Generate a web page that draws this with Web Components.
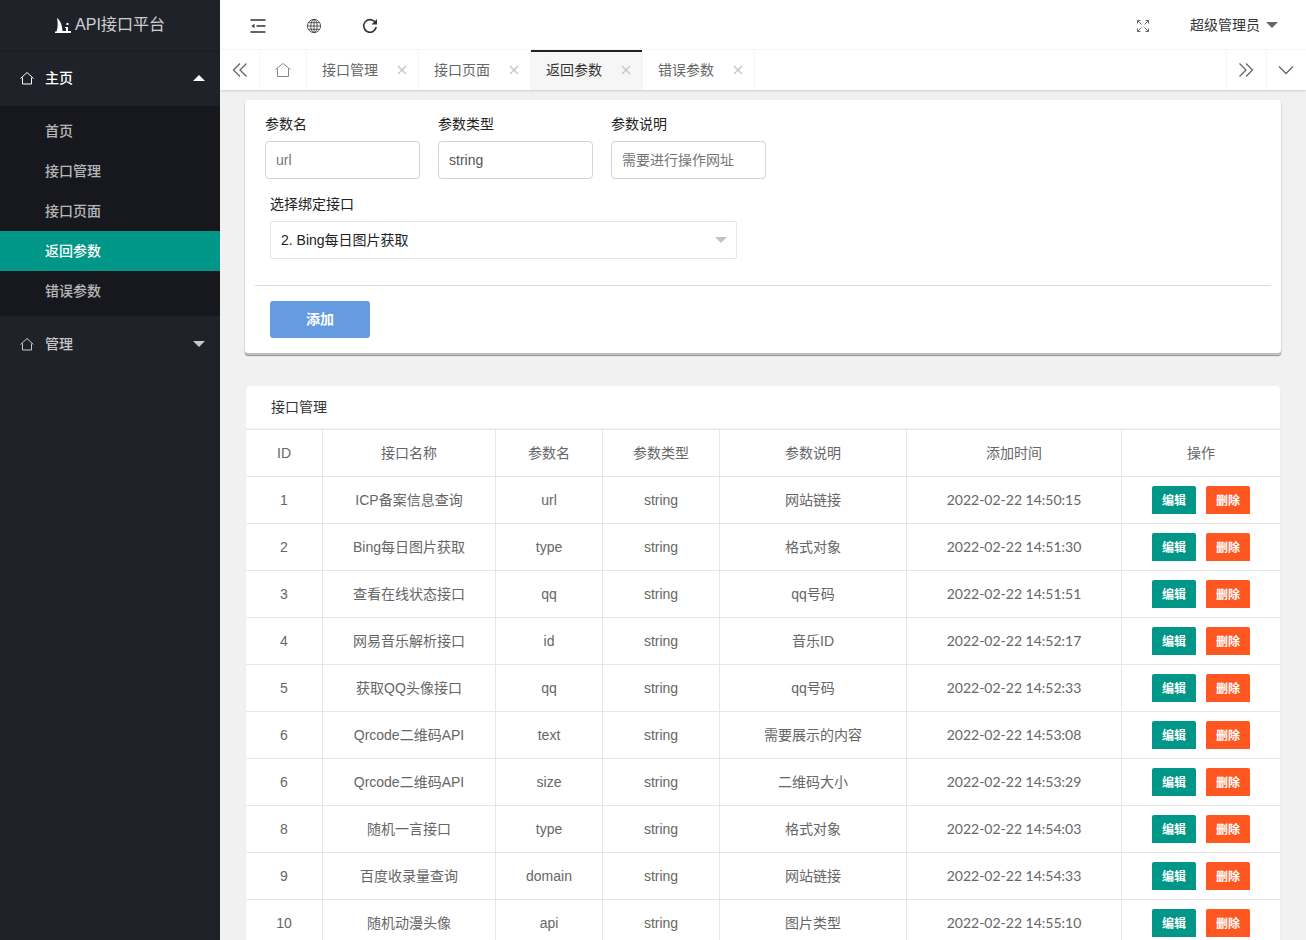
<!DOCTYPE html>
<html lang="zh-CN">
<head>
<meta charset="utf-8">
<meta name="viewport" content="width=device-width, initial-scale=1">
<title>API接口平台</title>
<style>
  body {
    margin: 0;
    background: #f1f1f1;
    color: #333;
    font: 14px/20px "Liberation Sans", "Noto Sans CJK SC", sans-serif;
  }
</style>
</head>
<body>
<app-shell>
  <side-nav slot="side">
    <nav-group label="主页" open>
      <nav-item>首页</nav-item>
      <nav-item>接口管理</nav-item>
      <nav-item>接口页面</nav-item>
      <nav-item active>返回参数</nav-item>
      <nav-item>错误参数</nav-item>
    </nav-group>
    <nav-group label="管理"></nav-group>
  </side-nav>
  <top-bar slot="top">超级管理员</top-bar>
  <tab-bar slot="tabs">
    <tab-item>接口管理</tab-item>
    <tab-item>接口页面</tab-item>
    <tab-item active>返回参数</tab-item>
    <tab-item>错误参数</tab-item>
  </tab-bar>
  <param-form></param-form>
  <param-table heading="接口管理"></param-table>
</app-shell>

<script>
const define = (name, html, setup) => {
  const template = document.createElement('template');
  template.innerHTML = html;
  customElements.define(name, class extends HTMLElement {
    connectedCallback() {
      if (this.shadowRoot) return;
      this.attachShadow({ mode: 'open' }).append(template.content.cloneNode(true));
      if (setup) setup(this, this.shadowRoot);
    }
  });
};

define('app-shell', `
  <style>
    :host { display: grid; grid-template-columns: 220px minmax(0, 1fr); height: 100vh; overflow: hidden; }
    .body { display: flex; flex-direction: column; min-width: 0; min-height: 0; }
    main { flex: 1; min-height: 0; overflow: auto; scrollbar-width: none; padding: 10px 25px 15px; }
  </style>
  <slot name="side"></slot>
  <div class="body">
    <slot name="top"></slot>
    <slot name="tabs"></slot>
    <main><slot></slot></main>
  </div>`);

define('side-nav', `
  <style>
    :host { display: block; background: #20222a; color: #fff; }
    .logo { display: flex; align-items: center; justify-content: center; gap: 4px; height: 50px;
      box-sizing: border-box; font-size: 16px; color: rgba(255,255,255,.8); box-shadow: 0 1px 2px rgba(0,0,0,.15); }
    svg { width: 16px; height: 16px; fill: #fff; }
  </style>
  <div class="logo">
    <svg viewBox="0 0 16 16" aria-hidden="true"><path d="M2 1c3 2 5 6 5.500 13H11v-3H10v-1h3v4h3v2H0v-1.500h1.500C3 11 3 5 2 1zM11.500 6h2v2h-2z"/></svg>
    <span>API接口平台</span>
  </div>
  <nav><slot></slot></nav>`);

define('nav-group', `
  <style>
    :host { display: block; color: rgba(255,255,255,.75); }
    :host([open]) { color: #fff; }
    button { all: unset; box-sizing: border-box; display: flex; align-items: center; width: 100%; height: 56px;
      padding: 0 15px 0 20px; cursor: pointer; font-weight: 500; }
    .home { width: 14px; height: 14px; margin-right: 11px; fill: none; stroke: currentColor; }
    .arrow { margin-left: auto; border: 6px solid transparent; border-top-color: currentColor; border-bottom: 0; }
    :host([open]) .arrow { border-top: 0; border-bottom: 6px solid currentColor; }
    .items { display: none; background: #17181e; padding: 5px 0; }
    :host([open]) .items { display: block; }
  </style>
  <button type="button">
    <svg class="home" viewBox="0 0 14 14" aria-hidden="true"><path d="M.5 7.500 7 1.500l6.500 6M2.500 6.500v6.500h9V6.500"/></svg>
    <span class="label"></span><span class="arrow"></span>
  </button>
  <div class="items"><slot></slot></div>`,
  (host, root) => {
    root.querySelector('.label').textContent = host.getAttribute('label');
    const button = root.querySelector('button');
    button.setAttribute('aria-expanded', host.hasAttribute('open'));
    button.onclick = () => button.setAttribute('aria-expanded', host.toggleAttribute('open'));
  });

define('nav-item', `
  <style>
    :host { display: block; }
    a { display: block; padding: 0 45px; line-height: 40px; font-weight: 500; color: rgba(255,255,255,.7); text-decoration: none; }
    :host([active]) a { background: #009688; color: #fff; }
  </style>
  <a href="#"><slot></slot></a>`);

define('top-bar', `
  <style>
    :host { display: flex; align-items: center; height: 50px; box-sizing: border-box; background: #fff;
      border-bottom: 1px solid #f6f6f6; padding: 0 28px 0 30px; }
    button { all: unset; display: flex; cursor: pointer; color: #333; }
    .left { display: flex; gap: 40px; margin-right: auto; }
    svg { width: 16px; height: 16px; padding-top: 2px; fill: none; stroke: currentColor; }
    .user { align-items: center; gap: 6px; margin-left: 39px; }
    .user i { border: 6px solid transparent; border-top-color: #666; border-bottom: 0; }
  </style>
  <div class="left">
    <button type="button" aria-label="侧边伸缩"><svg viewBox="0 0 16 16" stroke-width="1.500"><path d="M.5 2h15M6.500 8h9M.5 14h15"/><path d="M4.500 5.750 1.500 8l3 2.250z" fill="currentColor" stroke="none"/></svg></button>
    <button type="button" aria-label="前台"><svg viewBox="0 0 16 16" stroke-width=".8"><circle cx="8" cy="8" r="6.600"/><ellipse cx="8" cy="8" rx="3.200" ry="6.600"/><path d="M8 1.400v13.200M1.400 8h13.200M2.500 4.700h11M2.500 11.300h11"/></svg></button>
    <button type="button" aria-label="刷新"><svg viewBox="0 0 16 16" stroke-width="1.600"><path d="M12.800 3.800A6.300 6.300 0 1 0 14.200 9"/><path d="M15 1v5.500H9.500z" fill="currentColor" stroke="none"/></svg></button>
  </div>
  <button type="button" aria-label="全屏"><svg viewBox="0 0 16 16" style="color:#666"><path d="M2.500 5.500v-3h3M2.500 2.500 6.500 6.500M10.500 2.500h3v3M13.500 2.500l-4 4M2.500 10.500v3h3M2.500 13.500l4-4M13.500 10.500v3h-3M13.500 13.500l-4-4"/></svg></button>
  <button type="button" class="user"><slot></slot><i></i></button>`);

define('tab-bar', `
  <style>
    :host { display: flex; height: 40px; background: #fff; box-shadow: 0 1px 2px rgba(0,0,0,.15); position: relative; }
    button { all: unset; box-sizing: border-box; width: 40px; display: flex; align-items: center; justify-content: center;
      cursor: pointer; color: #666; border-right: 1px solid #f6f6f6; }
    .home { width: 47px; color: #888; }
    svg { width: 16px; height: 16px; fill: none; stroke: currentColor; }
    .tabs { display: flex; flex: 1; min-width: 0; overflow: hidden; }
    .right { border-right: 0; border-left: 1px solid #f6f6f6; padding-right: 1px; }
  </style>
  <button type="button" aria-label="向左"><svg viewBox="0 0 16 16" stroke-width="1.300"><path d="M8 1.500 1.500 8 8 14.500M14.500 1.500 8 8l6.500 6.500"/></svg></button>
  <button type="button" class="home" aria-label="主页"><svg viewBox="0 0 16 16"><path d="M.5 7.500 8 1.500l7.500 6M2.500 6.500v8h11v-8"/></svg></button>
  <div class="tabs"><slot></slot></div>
  <button type="button" class="right" aria-label="向右"><svg viewBox="0 0 16 16" stroke-width="1.300"><path d="M1.500 1.500 8 8l-6.500 6.500M8 1.500 14.500 8 8 14.500"/></svg></button>
  <button type="button" class="right" aria-label="更多"><svg viewBox="0 0 16 16" stroke-width="1.300"><path d="M1 4.500l7 7 7-7"/></svg></button>`);

define('tab-item', `
  <style>
    :host { display: flex; align-items: center; box-sizing: border-box; width: 112px; padding: 0 11px 0 15px;
      border-right: 1px solid #f6f6f6; color: #666; }
    :host([active]) { background: #f6f6f6; box-shadow: inset 0 2px #20222a; }
    a { color: inherit; text-decoration: none; margin-right: auto; }
    :host([active]) a { color: #333; }
    button { all: unset; display: flex; cursor: pointer; }
    svg { width: 10px; height: 10px; stroke: #c2c2c2; stroke-width: 1.200; }
  </style>
  <a href="#"><slot></slot></a>
  <button type="button" aria-label="关闭"><svg viewBox="0 0 10 10"><path d="M1 1l8 8M9 1 1 9"/></svg></button>`);

define('param-form', `
  <style>
    :host { display: block; background: #fff; border-radius: 3px; padding: 14px 10px 15px; margin-bottom: 33px;
      box-shadow: 0 1px 2px rgba(0,0,0,.2), 0 2px #d4d4d4, 0 3px 1px #909090; }
    .fields { display: flex; flex-wrap: wrap; gap: 18px; padding: 0 10px; }
    .field { display: flex; flex-direction: column; gap: 7px; width: 155px; color: #222; }
    input, select { all: unset; box-sizing: border-box; width: 100%; height: 38px; padding: 0 10px; background: #fff; }
    input { border: 1px solid #ced4da; border-radius: 4px; color: #555; }
    input::placeholder { color: #757575; opacity: 1; }
    .bind { width: auto; max-width: 467px; margin: 15px 15px 26px; }
    .pick { display: grid; align-items: center; }
    .pick > * { grid-area: 1 / 1; }
    select { border: 1px solid #e6e6e6; border-radius: 2px; color: #222; line-height: 36px; }
    .pick i { justify-self: end; margin-right: 10px; border: 6px solid transparent; border-top-color: #c2c2c2; border-bottom: 0; pointer-events: none; }
    hr { margin: 0 0 15px; border: 0; border-top: 1px solid #dcdcdc; }
    .add { all: unset; box-sizing: border-box; display: block; width: 100px; height: 37px; margin-left: 15px; padding-bottom: 2px; text-align: center;
      background: #659be0; color: #fff; font-weight: 700; border-radius: 3px; cursor: pointer; }
  </style>
  <form>
    <div class="fields">
      <div class="field"><label for="name">参数名</label><input id="name" type="text" placeholder="url"></div>
      <div class="field"><label for="type">参数类型</label><input id="type" type="text" value="string"></div>
      <div class="field"><label for="desc">参数说明</label><input id="desc" type="text" placeholder="需要进行操作网址"></div>
    </div>
    <div class="field bind">
      <label for="api">选择绑定接口</label>
      <div class="pick"><select id="api"><option>2. Bing每日图片获取</option></select><i></i></div>
    </div>
    <hr>
    <button type="button" class="add">添加</button>
  </form>`);

define('param-table', `
  <style>
    :host { display: block; background: #fff; border-radius: 4px; margin: 0 1px; box-shadow: 0 1px 2px rgba(0,0,0,.05); }
    h2 { margin: 0; padding: 0 25px; font-size: 14px; font-weight: 400; line-height: 42px; border-bottom: 1px solid #f6f6f6; }
    table { width: 100%; table-layout: fixed; border-collapse: separate; border-spacing: 0; color: #666; border-top: 1px solid #e6e6e6; }
    th, td { box-sizing: border-box; height: 47px; padding: 0; text-align: center; font-weight: 400;
      border-right: 1px solid #e6e6e6; border-bottom: 1px solid #e6e6e6; }
    th:last-child, td:last-child { border-right: 0; }
    time { font-family: Lato, sans-serif; }
    .ops { display: flex; justify-content: center; gap: 10px; }
    button { all: unset; box-sizing: border-box; width: 44px; height: 28px; padding-top: 2px; border-radius: 2px 2px 0 0; font-size: 12px; font-weight: 700;
      color: #fff; text-align: center; cursor: pointer; background: #009688; }
    button + button { background: #ff5722; }
  </style>
  <h2></h2>
  <table>
    <colgroup><col style="width:77px"><col style="width:173px"><col style="width:107px"><col style="width:117px"><col style="width:187px"><col style="width:215px"><col style="width:158px"></colgroup>
    <thead><tr><th>ID</th><th>接口名称</th><th>参数名</th><th>参数类型</th><th>参数说明</th><th>添加时间</th><th>操作</th></tr></thead>
    <tbody></tbody>
  </table>`,
  (host, root) => {
    root.querySelector('h2').textContent = host.getAttribute('heading');
    const rows = [
      [1, 'ICP备案信息查询', 'url', '网站链接', '14:50:15'],
      [2, 'Bing每日图片获取', 'type', '格式对象', '14:51:30'],
      [3, '查看在线状态接口', 'qq', 'qq号码', '14:51:51'],
      [4, '网易音乐解析接口', 'id', '音乐ID', '14:52:17'],
      [5, '获取QQ头像接口', 'qq', 'qq号码', '14:52:33'],
      [6, 'Qrcode二维码API', 'text', '需要展示的内容', '14:53:08'],
      [6, 'Qrcode二维码API', 'size', '二维码大小', '14:53:29'],
      [8, '随机一言接口', 'type', '格式对象', '14:54:03'],
      [9, '百度收录量查询', 'domain', '网站链接', '14:54:33'],
      [10, '随机动漫头像', 'api', '图片类型', '14:55:10']
    ];
    root.querySelector('tbody').innerHTML = rows.map(([id, name, key, desc, at]) =>
      `<tr><td>${id}</td><td>${name}</td><td>${key}</td><td>string</td><td>${desc}</td><td><time>2022-02-22 ${at}</time></td>` +
      `<td><div class="ops"><button type="button">编辑</button><button type="button">删除</button></div></td></tr>`).join('');
  });
</script>
</body>
</html>
